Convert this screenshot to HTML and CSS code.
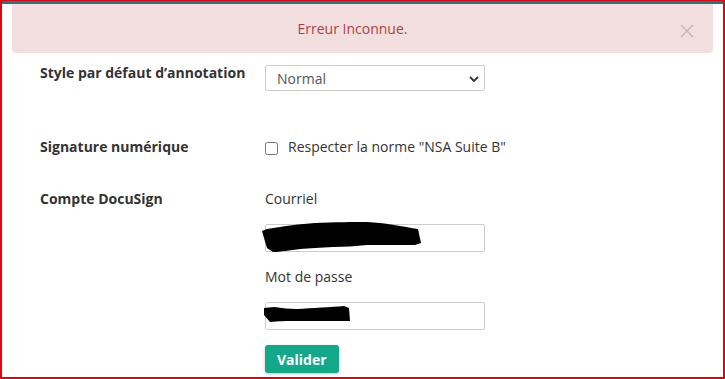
FILE: index.html
```html
<!DOCTYPE html>
<html lang="fr">
<head>
<meta charset="utf-8">
<title>Paramètres</title>
<link rel="stylesheet" href="styles.css">
</head>
<body>
<div class="frame">
  <div class="topbar"></div>
  <div class="alert">
    <span class="alert-text">Erreur Inconnue.</span>
    <span class="close" aria-label="Fermer">
      <svg width="14" height="14" viewBox="0 0 14 14"><path d="M1 1 L13 13 M13 1 L1 13" stroke="#c4bcbc" stroke-width="1.6" fill="none"/></svg>
    </span>
  </div>
  <form class="settings">
    <div class="row row-style">
      <div class="label">Style par défaut d’annotation</div>
      <div class="control">
        <div class="select-wrap">
          <select class="select"><option>Normal</option></select>
          <svg class="chevron" width="10" height="6" viewBox="0 0 10 6"><path d="M1 1 L5 5 L9 1" stroke="#333" stroke-width="1.8" fill="none"/></svg>
        </div>
      </div>
    </div>
    <div class="row row-sig">
      <div class="label">Signature numérique</div>
      <div class="control">
        <label class="check"><input type="checkbox" class="checkbox"><span>Respecter la norme "NSA Suite B"</span></label>
      </div>
    </div>
    <div class="row row-docu">
      <div class="label">Compte DocuSign</div>
      <div class="control">
        <div class="field">
          <div class="field-label">Courriel</div>
          <div class="input-wrap">
            <input class="input" type="text">
            <svg class="redact" width="160" height="32" viewBox="-3 -2 160 32"><path d="M-3 7 L2 5 C20 2 35 0 50 -1 C68 -2 90 -2 102 -2 C120 -1 135 2 153 5 L156 19 L150 21 C130 21 115 21 102 21 C90 22 80 23 68 23 C55 24 45 24 35 25 C25 26 15 28 8 28 L2 24 L-1 14 Z" fill="#000"/></svg>
          </div>
        </div>
        <div class="field">
          <div class="field-label">Mot de passe</div>
          <div class="input-wrap">
            <input class="input" type="password">
            <svg class="redact" width="92" height="26" viewBox="0 0 92 26"><path d="M2 8 L12 7 C20 8 28 9 35 9 C50 8 70 7 82 6 L87 8 L88 21 C70 21 50 21 35 21 C25 21 15 21 8 22 L2 15 Z" fill="#000"/></svg>
          </div>
        </div>
        <button type="button" class="btn">Valider</button>
      </div>
    </div>
  </form>
</div>
</body>
</html>
```

FILE: styles.css
```css
* { box-sizing: border-box; }
html, body { margin: 0; padding: 0; background: #fff; }
body {
  font-family: "Open Sans", "Liberation Sans", sans-serif;
  font-size: 14px;
  line-height: 20px;
  color: #333;
}
.frame {
  width: 725px;
  height: 379px;
  border: 2px solid #e8000b;
  border-top: 1px solid #e8000b;
  overflow: hidden;
}
.topbar {
  height: 3px;
  background: #177b8b;
}
.alert {
  position: relative;
  margin: 0 10px;
  height: 49px;
  padding: 15px 35px 14px 15px;
  background: #f2dede;
  border-radius: 0 0 4px 4px;
  color: #a94442;
  text-align: center;
}
.close {
  position: absolute;
  right: 19px;
  top: 20px;
  width: 14px;
  height: 14px;
  display: block;
}
.close svg { display: block; }
.settings {
  padding-left: 38px;
  padding-top: 10px;
}
.row {
  display: grid;
  grid-template-columns: 225px 220px;
}
.label {
  font-weight: 700;
  color: #333;
}
.row-style { margin-bottom: 46px; }
.row-sig { margin-bottom: 32px; }
.select-wrap {
  position: relative;
  margin-top: 2px;
  height: 26px;
}
.select {
  appearance: none;
  -webkit-appearance: none;
  width: 220px;
  height: 26px;
  border: 1px solid #ccc;
  border-radius: 2px;
  background: #fff;
  padding: 0 0 0 11px;
  font-family: inherit;
  font-size: 14px;
  color: #555;
  margin: 0;
}
.chevron {
  position: absolute;
  right: 6px;
  top: 11px;
}
.check {
  display: flex;
  align-items: center;
  gap: 10px;
  color: #333;
  white-space: nowrap;
}
.checkbox {
  margin: 2px 0 0 0;
  width: 13px;
  height: 13px;
  flex: none;
}
.field-label { margin-bottom: 15px; }
.field + .field { margin-top: 15px; }
.input-wrap {
  position: relative;
  height: 28px;
}
.input {
  display: block;
  width: 220px;
  height: 28px;
  border: 1px solid #ccc;
  border-radius: 2px;
  margin: 0;
  padding: 0 8px;
  font-family: inherit;
  font-size: 14px;
}
.redact {
  position: absolute;
  left: -3px;
  top: -2px;
}
.btn {
  margin-top: 15px;
  height: 28px;
  padding: 0 12px;
  border: none;
  border-radius: 3px;
  background: #12a98b;
  color: #fff;
  font-family: inherit;
  font-size: 14px;
  font-weight: 700;
  box-shadow: 0 1px 3px rgba(0,0,0,0.25);
}
```
